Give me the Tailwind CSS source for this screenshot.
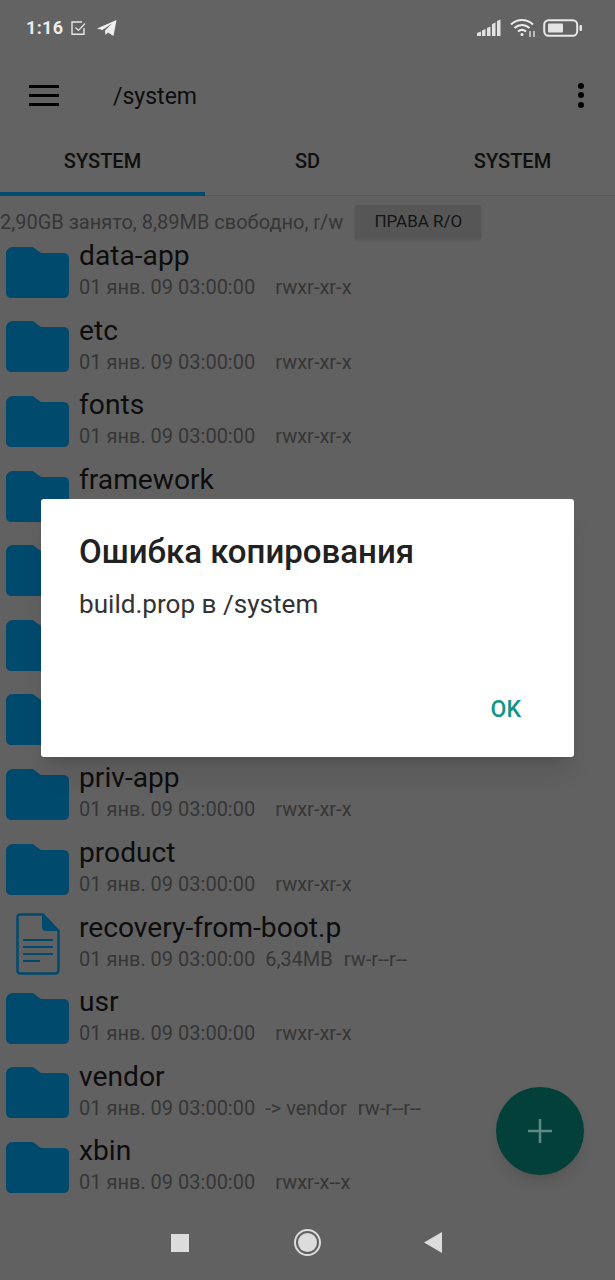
<!DOCTYPE html>
<html lang="en">
<head>
  <meta charset="UTF-8">
  <meta name="viewport" content="width=device-width, initial-scale=1.0">
  <title>File Manager</title>
  <script src="https://cdn.jsdelivr.net/npm/@tailwindcss/browser@4"></script>
</head>
<body class="bg-[#616161]">
  <div class="relative w-[615px] h-[1280px] overflow-hidden flex flex-col bg-[#616161] font-['Roboto',sans-serif]">

    <!-- status bar -->
    <div class="h-[56px] shrink-0 flex items-center justify-between pl-[26px] pr-[32px] bg-[#636363] text-[#ececec]">
      <div class="flex items-center">
        <span class="text-[18px] font-bold leading-none tracking-[0.3px]">1:16</span>
        <svg class="ml-[8px]" width="16" height="16" viewBox="0 0 16 16" fill="none" stroke="#e6e6e6" stroke-width="1.4"><path d="M13 8v6.2H1V2h10"/><path d="M4.5 7.5l3 3L14 3.5" stroke-width="1.2"/></svg>
        <svg class="ml-[10px]" width="20" height="18" viewBox="0 0 20 18"><path fill="#efefef" d="M0 9.5 19.5 1 16.5 17 11 13.5 8.5 16 8 11.5 15 4.5 5.5 11z"/></svg>
      </div>
      <div class="flex items-center">
        <svg width="24" height="18" viewBox="0 0 24 18" fill="#e2e2e2"><path d="M0 14l4-1.500V17H0zM5 11.500l3.500-1.500V17H5zM10 9l3.500-1.500V17H10zM15 5l3.500-1.500V17H15zM20 2l3.500-1.500V17H20z"/></svg>
        <svg class="ml-[9px]" width="26" height="20" viewBox="0 0 26 20" fill="none" stroke="#ececec" stroke-width="2.2"><path d="M1 6.500c6.500-6 15.500-6 22 0"/><path d="M4.500 10c4.500-4 10.500-4 15 0"/><path d="M8 13.500c2.500-2 5.500-2 8 0"/><circle cx="12" cy="16.500" r="1.500" fill="#ececec" stroke="none"/><path d="M20 13v6M24 13v6" stroke-width="1.300"/></svg>
        <svg class="ml-[7px]" width="40" height="18" viewBox="0 0 40 18" fill="none"><rect x="1.200" y="1.200" width="33" height="15.600" rx="4.500" stroke="#e8e8e8" stroke-width="2"/><rect x="5" y="4.500" width="15" height="9" rx="1" fill="#e4e4e4"/><rect x="36.500" y="6" width="2.500" height="6" rx="1" fill="#e4e4e4"/></svg>
      </div>
    </div>

    <!-- toolbar -->
    <div class="h-[78px] shrink-0 flex items-center bg-[#636363]">
      <div class="ml-[29px] w-[30px] flex flex-col gap-[6px]">
        <div class="h-[3px] bg-black"></div>
        <div class="h-[3px] bg-black"></div>
        <div class="h-[3px] bg-black"></div>
      </div>
      <span class="ml-[54px] text-[23px] leading-none text-[#0d0d0d] pt-[2px]">/system</span>
      <div class="ml-auto mr-[31px] flex flex-col gap-[3.500px]">
        <div class="w-[6px] h-[6px] rounded-full bg-black"></div>
        <div class="w-[6px] h-[6px] rounded-full bg-black"></div>
        <div class="w-[6px] h-[6px] rounded-full bg-black"></div>
      </div>
    </div>

    <!-- tabs -->
    <div class="h-[62px] shrink-0 grid grid-cols-3 bg-[#636363] border-b border-[#595959] text-[20px] font-medium text-[#0f0f0f]">
      <div class="relative flex items-center justify-center pb-[8px]">SYSTEM
        <div class="absolute left-0 right-0 bottom-[-1px] h-[4px] bg-[#004a6e]"></div>
      </div>
      <div class="flex items-center justify-center pb-[8px]">SD</div>
      <div class="flex items-center justify-center pb-[8px]">SYSTEM</div>
    </div>

    <!-- storage line -->
    <div class="h-[39px] shrink-0 flex items-start pt-[9px]">
      <span class="text-[20px] leading-[34px] text-[#363636] whitespace-nowrap">2,90GB занято, 8,89MB свободно, r/w</span>
      <div class="ml-[12px] w-[126px] h-[34px] shrink-0 flex items-center justify-center rounded-[2px] bg-[#565656] shadow-sm text-[17px] text-[#141414]">ПРАВА R/O</div>
    </div>

    <!-- file list -->
    <div id="files" class="flex-1 min-h-0 overflow-hidden"></div>

    <!-- nav bar -->
    <div class="h-[75px] shrink-0 relative flex items-center bg-[#616161]">
      <div class="ml-[171px] w-[18px] h-[18px] bg-[#dcdcdc]"></div>
      <div class="ml-[105px] w-[27px] h-[27px] rounded-full border-[2px] border-[#dcdcdc] flex items-center justify-center">
        <div class="w-[19px] h-[19px] rounded-full bg-[#dcdcdc]"></div>
      </div>
      <svg class="ml-[103px]" width="18" height="21" viewBox="0 0 18 21"><path fill="#dcdcdc" d="M0 10.500 18 0v21z"/></svg>
    </div>

    <!-- fab -->
    <div class="absolute left-[496px] top-[1087px] w-[88px] h-[88px] rounded-full bg-[#03403a] shadow-lg flex items-center justify-center">
      <svg width="24" height="24" viewBox="0 0 24 24" stroke="#5f8a84" stroke-width="2.500"><path d="M0 12h24M12 0v24"/></svg>
    </div>

    <!-- dialog -->
    <div class="absolute left-[41px] top-[499px] w-[533px] h-[258px] bg-white rounded-[3px] shadow-xl">
      <h2 class="absolute left-[38px] top-[34px] text-[33px] leading-[38px] font-medium text-[#212121] whitespace-nowrap">Ошибка копирования</h2>
      <p class="absolute left-[38px] top-[88px] text-[26.100px] leading-[34px] text-[#333333] whitespace-nowrap">build.prop в /system</p>
      <button class="absolute right-[53px] top-[197px] text-[23px] leading-[28px] font-medium text-[#0f9688]">OK</button>
    </div>
  </div>

  <script>
    const folder = `<svg width="63" height="51" viewBox="0 0 63 51"><path fill="#004a6e" d="M7 0h18c2 0 3 .6 4.500 2L35 6h22c4 0 6 2 6 6v33c0 4-2 6-6 6H6c-4 0-6-2-6-6V7c0-4 3-7 7-7z"/></svg>`;
    const doc = `<svg width="44" height="62" viewBox="0 0 44 62" fill="none" stroke="#004a6e"><path stroke-width="2.500" d="M4 1.500h23L42.500 18v39c0 2-1.500 3.500-3.500 3.500H4C2.500 60.500 1.500 59 1.500 57V4C1.500 2.500 2.500 1.500 4 1.500z"/><path fill="#004a6e" stroke="none" d="M26 2l16 16H30c-2.500 0-4-1.500-4-4z"/><path stroke-width="2" d="M7 27h30M7 34h30M7 41h30M7 48h17"/></svg>`;

    // rows behind the dialog only show their folder icon
    const files = [
      { name: 'data-app', perm: 'rwxr-xr-x' },
      { name: 'etc', perm: 'rwxr-xr-x' },
      { name: 'fonts', perm: 'rwxr-xr-x' },
      { name: 'framework' },
      {},
      {},
      {},
      { name: 'priv-app', perm: 'rwxr-xr-x' },
      { name: 'product', perm: 'rwxr-xr-x' },
      { name: 'recovery-from-boot.p', size: '6,34MB', perm: 'rw-r--r--', file: true },
      { name: 'usr', perm: 'rwxr-xr-x' },
      { name: 'vendor', size: '-> vendor', perm: 'rw-r--r--' },
      { name: 'xbin', perm: 'rwxr-x--x' },
    ];

    function meta(f) {
      if (!f.perm) return '';
      const rest = f.size
        ? `<span class="ml-[10px]">${f.size}</span><span class="ml-[11px]">${f.perm}</span>`
        : `<span class="ml-[20px]">${f.perm}</span>`;
      return `01 янв. 09 03:00:00${rest}`;
    }

    document.getElementById('files').innerHTML = files.map(f => `
      <div class="h-[74.6px] flex items-center">
        <div class="w-[79px] shrink-0 flex justify-center pr-[4px]">${f.file ? doc : folder}</div>
        <div class="flex flex-col">
          <div class="h-[31px] text-[28.200px] leading-[29px] text-[#0d0d0d] whitespace-nowrap">${f.name || ''}</div>
          <div class="h-[31px] text-[20px] leading-[31px] text-[#363636] whitespace-nowrap">${meta(f)}</div>
        </div>
      </div>`).join('');
  </script>
</body>
</html>
